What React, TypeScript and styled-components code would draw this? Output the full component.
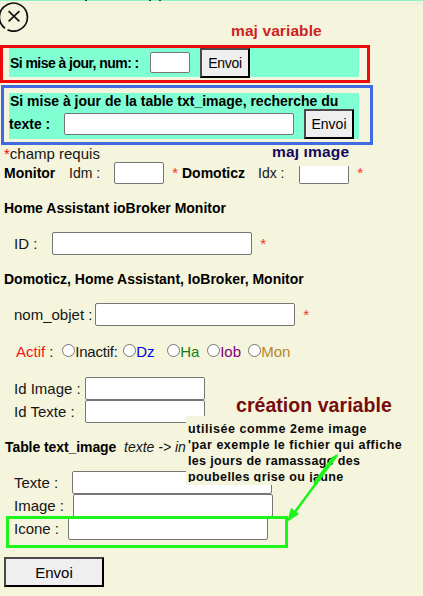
import React from "react";
import styled, { createGlobalStyle } from "styled-components";

const GlobalStyle = createGlobalStyle`
  * { box-sizing: border-box; }
  body {
    margin: 0;
    background: #f5f4dc;
    font-family: "Liberation Sans", Arial, sans-serif;
    color: #0a0a0a;
  }
`;

const Page = styled.main`
  position: relative;
  width: 423px;
  height: 596px;
  overflow: hidden;
  display: flex;
  flex-direction: column;
  align-items: flex-start;
`;

const TopStrip = styled.div`
  width: 100%;
  height: 4px;
  display: flex;
  background: #f5f4dc;
  border-top: 1px solid #8df3c8;
  border-bottom: 1px solid #ecebdc;
  flex: none;
`;

const Descender = styled.i<{ $ml: number }>`
  width: 2px;
  height: 1px;
  margin-top: -1px;
  margin-left: ${(p) => p.$ml}px;
  background: #2c3a30;
`;

const Header = styled.header`
  display: flex;
  height: 42px;
  margin-top: -3px;
  margin-bottom: 2px;
  flex: none;
`;

const CloseButton = styled.button`
  border: 0;
  padding: 0;
  width: 30px;
  height: 31px;
  margin-left: -1px;
  background: transparent;
`;

const Frame = styled.section<{ $color: string; $w: number; $h: number; $pad: string; $m: string }>`
  flex: none;
  width: ${(p) => p.$w}px;
  height: ${(p) => p.$h}px;
  margin: ${(p) => p.$m};
  padding: ${(p) => p.$pad};
  border: 3px solid ${(p) => p.$color};
`;

const Mint = styled.div<{ $h: number }>`
  width: 350px;
  height: ${(p) => p.$h}px;
  background: #80ffd2;
`;

const Row = styled.div<{ $h?: number; $mt?: number; $ml?: number }>`
  display: flex;
  align-items: center;
  flex: none;
  height: ${(p) => p.$h ?? 23}px;
  margin-top: ${(p) => p.$mt ?? 0}px;
  margin-left: ${(p) => p.$ml ?? 0}px;
`;

const Label = styled.span<{ $w?: number; $size?: number; $color?: string; $ls?: number }>`
  flex: none;
  width: ${(p) => (p.$w ? `${p.$w}px` : "auto")};
  font-size: ${(p) => p.$size ?? 15}px;
  line-height: 18px;
  letter-spacing: ${(p) => p.$ls ?? 0}px;
  color: ${(p) => p.$color ?? "#151515"};
  white-space: pre;
`;

const Strong = styled(Label)`
  font-weight: 700;
  color: #000;
`;

const Slant = styled(Label)`
  font-style: italic;
`;

const Field = styled.input<{ $w: number; $h?: number; $open?: boolean }>`
  flex: none;
  width: ${(p) => p.$w}px;
  height: ${(p) => p.$h ?? 23}px;
  margin: 0;
  padding: 0 2px;
  background: #fff;
  border: 1px solid #767676;
  border-top-width: ${(p) => (p.$open ? 0 : 1)}px;
  border-radius: ${(p) => (p.$open ? "0 0 2px 2px" : "2px")};
  align-self: ${(p) => (p.$open ? "flex-end" : "center")};
`;

const Submit = styled.button<{ $w: number; $h: number; $size: number; $ml?: number; $ls?: number }>`
  flex: none;
  width: ${(p) => p.$w}px;
  height: ${(p) => p.$h}px;
  margin: 0 0 0 ${(p) => p.$ml ?? 0}px;
  padding: 0;
  font: ${(p) => p.$size}px "Liberation Sans", Arial, sans-serif;
  letter-spacing: ${(p) => p.$ls ?? 0}px;
  color: #000;
  background: #efefef;
  border: 2px solid;
  border-color: #4a4a4a #000 #000 #4a4a4a;
`;

const Radio = styled.span`
  flex: none;
  width: 13px;
  height: 13px;
  margin-bottom: 3px;
  border: 1px solid #767676;
  border-radius: 50%;
  background: #fff;
`;

const Caption = styled.div<{ $x: number; $y: number; $size: number; $color: string; $ls: number }>`
  position: absolute;
  left: ${(p) => p.$x}px;
  top: ${(p) => p.$y}px;
  font-size: ${(p) => p.$size}px;
  line-height: 20px;
  letter-spacing: ${(p) => p.$ls}px;
  font-weight: 700;
  color: ${(p) => p.$color};
  white-space: pre;
`;

const ClippedCaption = styled(Caption)`
  clip-path: inset(6px 0 0 0);
`;

const Note = styled.aside`
  position: absolute;
  left: 186px;
  top: 416px;
  width: 222px;
  height: 69px;
  background: #f5f4dc;
  padding: 0 0 0 2px;
`;

const NoteText = styled.div`
  padding-top: 5px;
  clip-path: inset(8px 0 3px 0);
  font-size: 12.5px;
  font-weight: 700;
  color: #0a0a0a;
`;

const NoteLine = styled.div<{ $ls: number }>`
  height: 16px;
  line-height: 16px;
  letter-spacing: ${(p) => p.$ls}px;
  white-space: pre;
`;

const IconeOutline = styled.div`
  position: absolute;
  left: 6px;
  top: 516px;
  width: 282px;
  height: 32px;
  border: 3px solid #1bf51b;
`;

const Arrow = styled.svg`
  position: absolute;
  left: 280px;
  top: 450px;
`;

const sources = [
  { name: "Dz", color: "#0000e0", w: 31 },
  { name: "Ha", color: "#118011", w: 27 },
  { name: "Iob", color: "#800080", w: 28 },
  { name: "Mon", color: "#b8862b", w: 40 },
];

export default function App() {
  return (
    <Page>
      <GlobalStyle />
      <TopStrip>
        <Descender $ml={85} />
        <Descender $ml={62} />
        <Descender $ml={8} />
      </TopStrip>
      <Header>
        <CloseButton aria-label="Fermer">
          <svg width="30" height="31" viewBox="0 0 30 31" fill="none" stroke="#111" strokeWidth="1.7">
            <path d="M6 27.3A14 14 0 1 1 8.5 28.8" />
            <path d="M9.6 10.2L20.4 20.4M20.4 10.2L9.6 20.4" />
          </svg>
        </CloseButton>
      </Header>

      <Frame $color="#ee0b0b" $w={370} $h={38} $pad="0 0 0 6px" $m="0">
        <Mint $h={29}>
          <Row $h={29} $ml={1}>
            <Strong $w={140} $size={14} $ls={-0.55}>Si mise à jour, num: :</Strong>
            <Field $w={40} $h={21} />
            <Submit $w={50} $h={30} $size={14} $ls={-0.3} $ml={10}>Envoi</Submit>
          </Row>
        </Mint>
      </Frame>

      <Frame $color="#4169e1" $w={372} $h={60} $pad="5px 0 0 5px" $m="2px 0 0 1px">
        <Mint $h={46}>
          <Row $h={16} $ml={1}>
            <Strong $size={14}>Si mise à jour de la table txt_image, recherche du</Strong>
          </Row>
          <Row $h={30}>
            <Strong $w={55} $size={14}>texte :</Strong>
            <Field $w={230} $h={22} />
            <Submit $w={50} $h={30} $size={14} $ml={10}>Envoi</Submit>
          </Row>
        </Mint>
      </Frame>

      <Row $h={17} $ml={4}>
        <Label $color="#f00">*</Label>
        <Label>champ requis</Label>
      </Row>
      <Row $h={22} $ml={4}>
        <Strong $w={65} $size={14}>Monitor</Strong>
        <Label $w={45} $size={14}>Idm :</Label>
        <Field $w={50} $h={22} />
        <Label $w={18} $color="#e33">{"  *"}</Label>
        <Strong $w={76} $size={14}>Domoticz</Strong>
        <Label $w={41} $size={14}>Idx :</Label>
        <Field $w={50} $h={18} $open />
        <Label $color="#e33">{"  *"}</Label>
      </Row>
      <Row $h={18} $mt={15} $ml={4}>
        <Strong $size={14}>Home Assistant ioBroker Monitor</Strong>
      </Row>
      <Row $mt={15} $ml={14}>
        <Label $w={38}>ID :</Label>
        <Field $w={200} />
        <Label $color="#e33">{"  *"}</Label>
      </Row>
      <Row $h={18} $mt={15} $ml={4}>
        <Strong $size={14}>Domoticz, Home Assistant, IoBroker, Monitor</Strong>
      </Row>
      <Row $mt={15} $ml={14}>
        <Label $w={81}>nom_objet :</Label>
        <Field $w={200} />
        <Label $color="#e33">{"  *"}</Label>
      </Row>
      <Row $h={20} $mt={16} $ml={16}>
        <Label $color="#f31616">Actif</Label>
        <Label $w={17}> :</Label>
        <Radio />
        <Label $w={48} $ls={-0.2}>Inactif:</Label>
        {sources.map((s) => (
          <React.Fragment key={s.name}>
            <Radio />
            <Label $w={s.w} $color={s.color}>{s.name}</Label>
          </React.Fragment>
        ))}
      </Row>
      <Row $mt={15} $ml={14}>
        <Label $w={71}>Id Image :</Label>
        <Field $w={120} />
      </Row>
      <Row $ml={14}>
        <Label $w={71}>Id Texte :</Label>
        <Field $w={120} />
      </Row>
      <Row $h={18} $mt={15} $ml={5}>
        <Strong $w={119} $size={14} $ls={-0.08}>Table text_image</Strong>
        <Slant $size={14}>{"texte -> in"}</Slant>
      </Row>
      <Row $mt={15} $ml={14}>
        <Label $w={58}>Texte :</Label>
        <Field $w={200} />
      </Row>
      <Row $ml={14}>
        <Label $w={59}>Image :</Label>
        <Field $w={200} />
      </Row>
      <Row $ml={14}>
        <Label $w={54}>Icone :</Label>
        <Field $w={200} />
      </Row>
      <Row $h={30} $mt={17} $ml={4}>
        <Submit $w={100} $h={30} $size={15}>Envoi</Submit>
      </Row>

      <Caption $x={231} $y={21} $size={15.5} $color="#cc1f1f" $ls={0.1}>maj variable</Caption>
      <ClippedCaption $x={272} $y={142} $size={15.5} $color="#130a5e" $ls={0.15}>maj image</ClippedCaption>
      <Caption $x={236} $y={395} $size={19.5} $color="#760c0c" $ls={0.05}>création variable</Caption>

      <Note>
        <NoteText>
          <NoteLine $ls={0.55}>utilisée comme 2eme image</NoteLine>
          <NoteLine $ls={0.5}>'par exemple le fichier qui affiche</NoteLine>
          <NoteLine $ls={0.35}>les jours de ramassage des</NoteLine>
          <NoteLine $ls={0.38}>poubelles grise ou jaune</NoteLine>
        </NoteText>
      </Note>
      <IconeOutline />
      <Arrow width="64" height="76" viewBox="0 0 64 76">
        <path d="M57 5L12 66" stroke="#1bf51b" strokeWidth="2.5" fill="none" />
        <path d="M58 4L52 7L33 33L36 36L39 31Z" fill="#1bf51b" />
        <path d="M7 72L11 58L14 60L19 64Z" fill="#1bf51b" />
      </Arrow>
    </Page>
  );
}
